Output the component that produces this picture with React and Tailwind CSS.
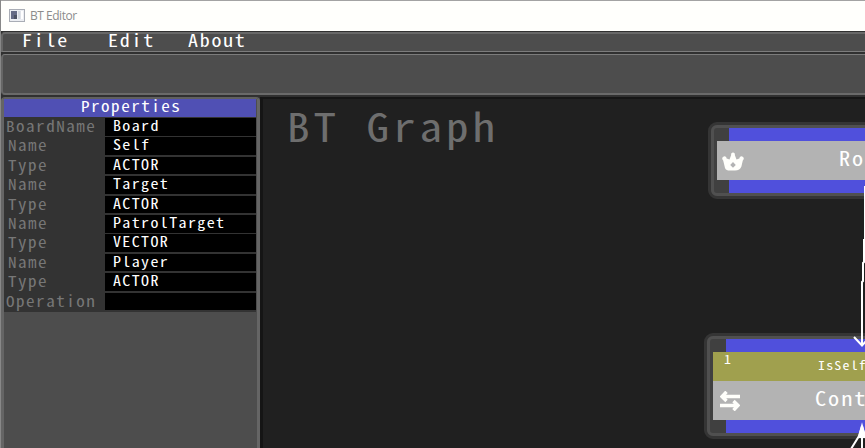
const rows = [
  ['BoardName', 'Board'],
  ['Name', 'Self'],
  ['Type', 'ACTOR'],
  ['Name', 'Target'],
  ['Type', 'ACTOR'],
  ['Name', 'PatrolTarget'],
  ['Type', 'VECTOR'],
  ['Name', 'Player'],
  ['Type', 'ACTOR'],
  ['Operation', ''],
];

// Widely tracked monospace lettering used across the editor.
function Mono({ children }) {
  return <span className="inline-block origin-left scale-x-[1.14] tracking-[0.087em] whitespace-nowrap">{children}</span>;
}

function TitleBar() {
  return (
    <header className="flex h-[31px] shrink-0 items-center border-t border-[#a3a3a3] bg-[#fffffc] pl-2">
      <svg width="16" height="13" viewBox="0 0 16 13" className="-mt-0.5">
        <rect x=".5" y=".5" width="15" height="12" fill="#eceef2" stroke="#a9adb5" />
        <rect x="2" y="2" width="6" height="8" fill="#656b85" />
        <rect x="5" y="6" width="3" height="4" fill="#4c5262" />
        <rect x="9" y="2" width="2.5" height="8" fill="#d3d7de" />
        <rect x="12" y="2" width="2" height="8" fill="#fff" />
      </svg>
      <span className="ml-[5px] font-['Open_Sans','Noto_Sans',sans-serif] text-[12px] tracking-[-0.48px] text-[#8c8c8c]">BT Editor</span>
    </header>
  );
}

function MenuBar() {
  return (
    <nav className="flex h-[22px] shrink-0 border-t border-[#303030]">
      <div className="flex h-5 w-full rounded-tl-sm border-t-2 border-b border-l-2 border-t-[#686868] border-b-[#7c7c7c] border-l-[#666] bg-[#4d4d4d] pl-[19px] text-[17.5px] leading-[12px] text-white">
        <span className="w-[86px]"><Mono>File</Mono></span>
        <span className="w-[80px]"><Mono>Edit</Mono></span>
        <span><Mono>About</Mono></span>
      </div>
    </nav>
  );
}

function Properties() {
  return (
    <aside className="w-[259px] shrink-0 rounded-t-sm border-x-[3px] border-t-2 border-x-[#656565] border-t-[#606060] bg-[#4d4d4d] pr-px">
      <h2 className="h-[18px] bg-[#5050b4] pl-[77px] text-[15px] leading-[14px] text-white"><Mono>Properties</Mono></h2>
      <div className="bg-[#333] pt-px">
        {rows.map(([label, value], i) => (
          <div key={i} className="flex h-[19.4px]">
            <span className={`w-[101px] shrink-0 text-[15px] leading-[15px] text-[#777] ${label.length > 4 ? 'pl-[2px]' : 'pl-[4px]'}`}>
              <Mono>{label}</Mono>
            </span>
            <span className="h-[17.6px] flex-1 bg-black pl-[8px] text-[14px] leading-[15px] text-white">
              <Mono>{value}</Mono>
            </span>
          </div>
        ))}
      </div>
    </aside>
  );
}

function Crown() {
  return (
    <svg width="22" height="20" viewBox="0 0 22 20" fill="#fffffb">
      <path fillRule="evenodd" d="M3 17 L1.2 9.4 A2.2 2.2 0 1 1 4.6 7.4 L7.5 8.4 L9.2 4 A1.9 1.9 0 1 1 12.8 4 L14.5 8.4 L17.4 7.4 A2.2 2.2 0 1 1 20.8 9.4 L19.4 15.5 Q18 19.6 13 19.6 H8 Q4 19.6 3 17Z M11 11 L8.2 14 L11 16.8 L13.8 14Z" />
    </svg>
  );
}

function Swap() {
  return (
    <svg width="20" height="20" viewBox="0 0 20 20" fill="none" stroke="#fffffb" strokeWidth="3.4">
      <path d="M20 5.5H2.5M6.5 .8 2 5.5 6.5 10M0 14.5H17.5M13.5 10 18 14.5 13.5 19.2" />
    </svg>
  );
}

function Graph() {
  return (
    <main className="relative flex-1 overflow-hidden border-t-2 border-l-[3px] border-t-[#161616] border-l-[#151515] bg-[#202020]">
      <h1 className="pt-px pl-[24px] text-[39.6px] leading-[50px] text-[#6e6e6e]"><Mono>BT Graph</Mono></h1>
      <div className="absolute top-[23px] left-[445px] h-[77px] w-[240px] rounded-[9px] border-[3px] border-[#353535] bg-[#404040]">
        <div className="h-full rounded-md border-[3px] border-[#505050] pl-[2px]">
          <div className="ml-[13px] h-full bg-[#5050dc] py-[13px]">
            <div className="-ml-3 flex h-[39px] items-center bg-[#b3b3b3] pl-[5px]">
              <Crown />
              <span className="ml-[95px] pb-[5px] text-[19.5px] leading-6 text-white"><Mono>Ro</Mono></span>
            </div>
          </div>
        </div>
      </div>
      <div className="absolute top-[234px] left-[441px] h-[106px] w-[240px] rounded-[9px] border-[3px] border-[#353535] bg-[#404040]">
        <div className="h-full rounded-md border-[3px] border-[#505050]">
          <div className="ml-4 h-full bg-[#5050dc] py-[13px]">
            <div className="-ml-[13px] w-[220px]">
              <div className="flex h-[29px] bg-[#a0a04e] pl-[11px] text-[12.2px] text-white">
                <span className="w-[94px] leading-[15px]"><Mono>1</Mono></span>
                <span className="leading-[26px]"><Mono>IsSelf</Mono></span>
              </div>
              <div className="flex h-[39px] items-center bg-[#b3b3b3] pl-[7px]">
                <Swap />
                <span className="ml-[75px] pb-[6px] text-[19.6px] leading-6 text-white"><Mono>Cont</Mono></span>
              </div>
            </div>
          </div>
        </div>
      </div>
      <svg className="absolute top-0 left-[582px]" width="20" height="349" viewBox="845 99 20 349" fill="none" stroke="#fff" strokeWidth="2">
        <path d="M865 186V240L864 240V262L863 263V281L862 282V345M854 337 862 345.5 870 337M862 426 859 436 851 449M862 426V449M862 426 865 436 873 449" />
        <path d="M862 426 859 437H865Z" fill="#fff" />
      </svg>
    </main>
  );
}

export default function App() {
  return (
    <div className="flex h-[448px] w-[865px] flex-col overflow-hidden border-l border-[#888] bg-[#303030] font-['Noto_Sans_Mono_CJK_SC','Noto_Sans_Mono_CJK_JP','Liberation_Mono',monospace]">
      <TitleBar />
      <MenuBar />
      <div className="mt-px h-[41px] shrink-0 rounded-l-sm border-t border-b-2 border-l-2 border-t-[#7c7c7c] border-b-[#6a6a6a] border-l-[#666] bg-[#4d4d4d]" />
      <div className="mt-0.5 flex min-h-0 flex-1">
        <Properties />
        <Graph />
      </div>
    </div>
  );
}
